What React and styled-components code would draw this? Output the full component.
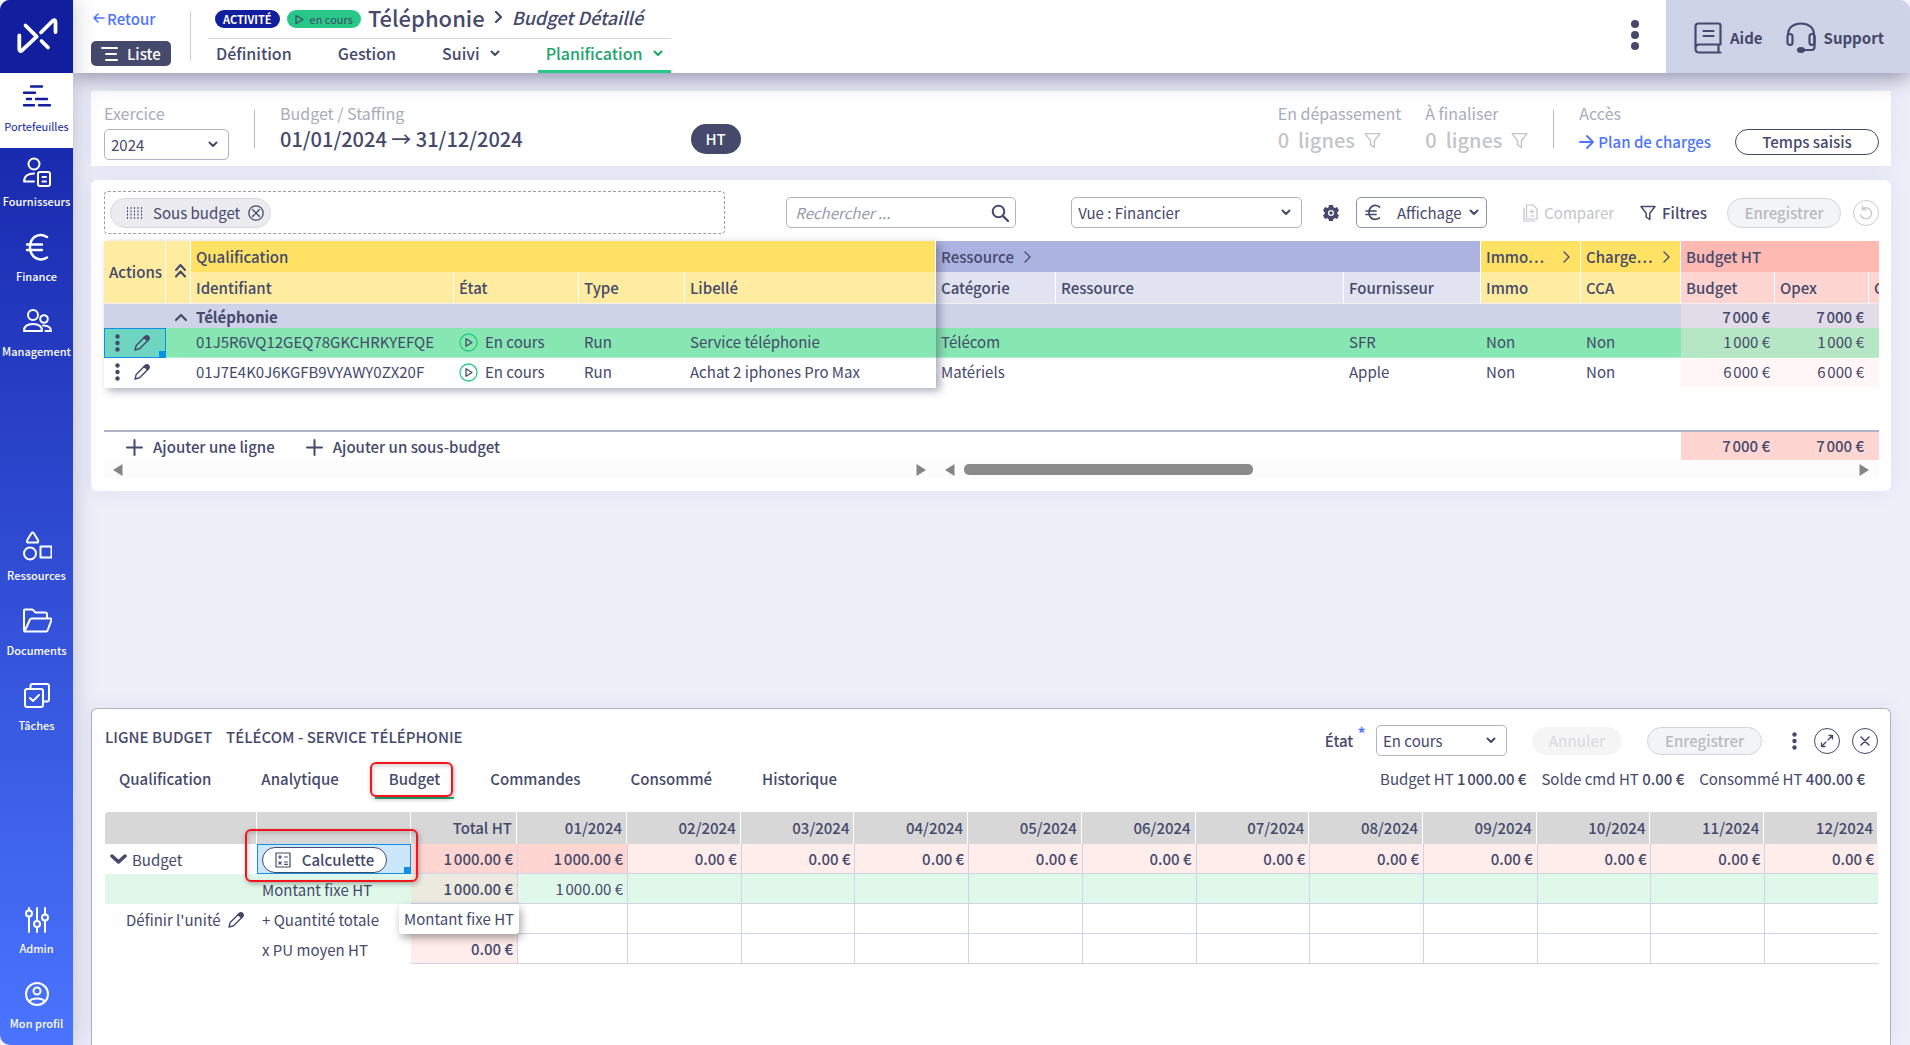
import React from "react";
import styled, { createGlobalStyle, css } from "styled-components";

const INK = "#45496b";
const MUTED = "#a9abb9";
const FAINT = "#c3c4c9";
const LINE = "#b0b2c5";
const BLUE = "#4d74fb";
const GREEN = "#27c887";

const GlobalStyle = createGlobalStyle`
  * {
    box-sizing: border-box;
  }
  body {
    margin: 0;
    background: #f4f4f4;
    color: ${INK};
    font-family: "Noto Sans CJK SC", sans-serif;
    font-size: 15px;
    line-height: 20px;
  }
  button, input, select {
    font: inherit;
    color: inherit;
  }
  button {
    padding: 0;
    border: 0;
    background: none;
    white-space: nowrap;
    cursor: pointer;
  }
  a {
    color: inherit;
    text-decoration: none;
  }
`;

const Page = styled.div`
  display: flex;
  min-height: 100vh;
  overflow: hidden;
  border-radius: 10px 10px 0 10px;
  background: #efeffa;
`;

/* Sidebar */

const Sidebar = styled.nav`
  position: relative;
  z-index: 3;
  flex: none;
  display: flex;
  flex-direction: column;
  width: 73px;
  background: linear-gradient(#0f1e9e, #1a2cb0 16%, #4a74ff);
  box-shadow: 0 0 22px rgba(69, 73, 107, 0.3);
`;

const Logo = styled.a`
  display: block;
  height: 73px;
  background: #111f9f;
`;

const Groups = styled.div`
  flex: 1;
  display: flex;
  flex-direction: column;
  justify-content: space-between;
`;

const NavItem = styled.a`
  display: flex;
  flex-direction: column;
  align-items: center;
  gap: 4px;
  height: 75px;
  padding-top: 9px;
  font-size: 11px;
  font-weight: ${(props) => (props.$active ? 400 : 500)};
  color: ${(props) => (props.$active ? "#111f9f" : "#fff")};
  background: ${(props) => (props.$active ? "#fff" : "transparent")};
  white-space: nowrap;
`;

/* Header */

const Main = styled.div`
  flex: 1;
  min-width: 0;
  display: flex;
  flex-direction: column;
`;

const Header = styled.header`
  position: relative;
  z-index: 2;
  display: flex;
  height: 73px;
  background: #fff;
  box-shadow: 0 4px 20px rgba(69, 73, 107, 0.6);
`;

const BackColumn = styled.div`
  display: flex;
  flex-direction: column;
  align-items: flex-start;
  gap: 12px;
  width: 117px;
  margin-top: 9px;
  padding-left: 18px;
`;

const BackLink = styled.a`
  display: flex;
  align-items: center;
  gap: 2px;
  padding-left: 2px;
  font-weight: 500;
  color: ${BLUE};
`;

const ListButton = styled.button`
  display: flex;
  align-items: center;
  gap: 9px;
  height: 25px;
  padding: 0 10px;
  border-radius: 5px;
  font-weight: 500;
  color: #fff;
  background: ${INK};
`;

const HeaderRule = styled.span`
  width: 1px;
  height: 50px;
  margin-top: 11px;
  background: #d0d1da;
`;

const HeaderBody = styled.div`
  margin-left: 17px;
`;

const TitleRow = styled.div`
  display: flex;
  align-items: center;
  gap: 7px;
  height: 39px;
  padding: 0 22px 0 7px;
  border-bottom: 1px solid #d3d4dc;
`;

const Chip = styled.span`
  display: flex;
  align-items: center;
  gap: 6px;
  height: 18px;
  padding: 0 8px;
  border-radius: 9px;
  font-size: 11px;
  font-weight: ${(props) => (props.$strong ? 700 : 400)};
  color: ${(props) => (props.$strong ? "#fff" : INK)};
  background: ${(props) => (props.$strong ? "#111f9f" : GREEN)};
`;

const Title = styled.h1`
  display: flex;
  align-items: center;
  gap: 10px;
  margin: 0;
  padding-bottom: 4px;
  font-size: 22px;
  font-weight: 500;
  line-height: 30px;
`;

const Crumb = styled.em`
  font-size: 18px;
`;

const MainTabs = styled.nav`
  display: flex;
`;

const MainTab = styled.a`
  display: flex;
  align-items: center;
  gap: 10px;
  height: 34px;
  margin-right: 30px;
  padding: 0 8px 3px;
  border-bottom: 3px solid ${(props) => (props.$active ? GREEN : "transparent")};
  font-size: 16px;
  font-weight: 500;
  color: ${(props) => (props.$active ? "#19a56c" : INK)};

  &:last-child {
    margin-right: 0;
  }
`;

const MenuButton = styled.button`
  margin-left: auto;
  padding: 0 27px;
`;

const HelpBar = styled.div`
  display: flex;
  align-items: center;
  gap: 23px;
  padding: 3px 26px 0 28px;
  font-weight: 700;
  background: #cfd3e8;
`;

const HelpLink = styled.a`
  display: flex;
  align-items: center;
  gap: 8px;
`;

/* Panels */

const Content = styled.main`
  flex: 1;
  display: flex;
  flex-direction: column;
  padding: 18px 19px 0 18px;
`;

const Panel = styled.section`
  background: #fff;
  box-shadow: 0 0 20px rgba(90, 95, 150, 0.1);
`;

const Summary = styled(Panel)`
  display: flex;
  height: 75px;
  padding: 12px 12px 0 13px;
`;

const Field = styled.div`
  display: flex;
  flex-direction: column;
  gap: ${(props) => props.$gap}px;
  margin-left: ${(props) => props.$ml || 0}px;
`;

const Caption = styled.label`
  font-size: 16px;
  color: ${MUTED};
`;

const Dates = styled.div`
  font-size: 20px;
  font-weight: 500;
  line-height: 24px;
`;

const TaxButton = styled.button`
  width: 50px;
  height: 30px;
  margin: 21px auto 0 168px;
  border-radius: 15px;
  font-weight: 500;
  color: #fff;
  background: ${INK};
`;

const Count = styled.button`
  display: flex;
  align-items: center;
  gap: 9px;
  font-size: 20px;
  line-height: 26px;
  font-weight: 500;
  color: ${FAINT};
`;

const SummaryRule = styled.span`
  width: 1px;
  height: 38px;
  margin: 7px 0 0 25px;
  background: #b4b6c6;
`;

const PlanLink = styled(BackLink)`
  gap: 4px;
  padding-left: 0;
`;

const SummaryAction = styled.div`
  margin: 26px 0 0 24px;
`;

const OutlineButton = styled.button`
  width: ${(props) => props.$w}px;
  height: 26px;
  border: 1px solid ${INK};
  border-radius: 13px;
  font-weight: 500;
  background: #fff;
`;

const SelectBox = styled.span`
  display: grid;
  align-items: center;
  width: ${(props) => props.$w}px;
  margin-left: ${(props) => props.$ml || 0}px;

  select, svg {
    grid-area: 1 / 1;
  }
  select {
    width: 100%;
    height: 31px;
    padding: 0 6px;
    border: 1px solid ${LINE};
    border-radius: 5px;
    background: #fff;
    appearance: none;
  }
  svg {
    justify-self: end;
    margin-right: 11px;
    pointer-events: none;
  }
`;

const GridPanel = styled(Panel)`
  margin-top: 14px;
  padding: 11px 12px 12px 13px;
  border-radius: 6px;
`;

const Toolbar = styled.div`
  display: flex;
  align-items: center;
  height: 43px;
  margin-bottom: 7px;
`;

const DropZone = styled.div`
  flex: 1;
  display: flex;
  align-items: center;
  height: 43px;
  padding-left: 5px;
  border: 1px dashed #9a9cb4;
  border-radius: 4px;
`;

const GroupChip = styled.span`
  display: flex;
  align-items: center;
  height: 30px;
  padding: 0 6px 0 16px;
  border: 1px solid #d8d8e2;
  border-radius: 15px;
  background: #ebebf0;

  button {
    height: 16px;
    margin-left: 8px;
  }
  svg {
    display: block;
  }
  span {
    margin-left: 11px;
  }
`;

const Search = styled.label`
  display: flex;
  align-items: center;
  width: 230px;
  height: 31px;
  margin: 0 55px 0 61px;
  padding: 0 6px 0 8px;
  border: 1px solid ${LINE};
  border-radius: 5px;

  input {
    flex: 1;
    min-width: 0;
    padding: 0;
    border: 0;
    outline: 0;
  }
  input::placeholder {
    font-style: italic;
    color: #9799ad;
    opacity: 1;
  }
`;

const GearButton = styled.button`
  height: 18px;
  margin: 0 16px 0 20px;
`;

const DisplayButton = styled.button`
  display: flex;
  align-items: center;
  justify-content: space-between;
  width: 131px;
  height: 31px;
  padding: 0 7px 0 8px;
  border: 1px solid #8f92ad;
  border-radius: 5px;

  span {
    margin-left: 8px;
  }
`;

const ToolButton = styled.button`
  display: flex;
  align-items: center;
  gap: 6px;
  margin-left: ${(props) => props.$ml}px;
  margin-right: ${(props) => props.$mr || 0}px;
  font-weight: ${(props) => (props.disabled ? 400 : 500)};
  color: ${(props) => (props.disabled ? FAINT : INK)};
`;

const PillButton = styled.button`
  width: ${(props) => props.$w}px;
  height: ${(props) => props.$h || 28}px;
  margin-left: ${(props) => props.$ml}px;
  border: 1px solid ${(props) => (props.$flat ? "#f5f5f6" : "#d3d4da")};
  border-radius: 15px;
  font-weight: 500;
  color: ${(props) => (props.$flat ? "#dcdce0" : "#b9babf")};
  background: ${(props) => (props.$flat ? "#f5f5f6" : "#f3f4f6")};
`;

const RoundButton = styled.button`
  display: flex;
  align-items: center;
  justify-content: center;
  width: 26px;
  height: 26px;
  margin-left: 12px;
  border: 1px solid ${(props) => (props.disabled ? "#c9cad0" : INK)};
  border-radius: 50%;
  color: ${(props) => (props.disabled ? "#c9cad0" : INK)};
`;

/* Budget grid */

const Split = styled.div`
  display: flex;
  height: 189px;
`;

const Frozen = styled.div`
  position: relative;
  z-index: 1;
  flex: none;
  width: 832px;
  height: 147px;
  background: #fff;
  box-shadow: 4px 3px 8px rgba(69, 73, 107, 0.45);
`;

const Scrolled = styled.div`
  flex: 1;
  min-width: 0;
  overflow: hidden;
`;

const Table = styled.table`
  width: ${(props) => props.$w};
  table-layout: fixed;
  border-collapse: separate;
  border-spacing: 0;

  th, td {
    padding: 0 5px;
    overflow: hidden;
    text-align: left;
    white-space: nowrap;
    font-weight: 400;
  }
  .toggle {
    padding: 0 0 0 8px;
  }
`;

const tones = {
  yellow: ["#ffe164", "#ffeca0"],
  indigo: ["#acb3e1", "#e1e3f1"],
  red: ["#ffb9b3", "#ffd5d1"],
};

const HeadTop = styled.tr`
  height: 31px;

  && th {
    font-weight: 500;
  }
`;

const HeadSub = styled(HeadTop)`
  height: 32px;
`;

const HeadCell = styled.th`
  border-right: 1px solid #fff;
  border-bottom: ${(props) => (props.$top ? 0 : 1)}px solid #f0f0f4;
  background: ${(props) => tones[props.$tone][props.$top ? 0 : 1]};
`;

const HeadLabel = styled.span`
  display: flex;
  align-items: center;
  justify-content: ${(props) => (props.$spread ? "space-between" : "flex-start")};
  gap: 10px;
  padding-right: 5px;
`;

const GroupRow = styled.tr`
  height: 24px;

  && td {
    padding-top: 2px;
    font-weight: 700;
    background: #ced3e8;
  }
  && td.amount {
    font-weight: 500;
    text-align: right;
    background: #e2dce9;
  }
`;

const LineRow = styled.tr`
  height: 30px;

  && td {
    padding-bottom: 1px;
    border-bottom: 1px solid ${(props) => (props.$selected ? "#b4f0ce" : "#fff")};
    background: ${(props) => (props.$selected ? "#86e7b2" : "#fff")};
  }
  && td.amount {
    text-align: right;
    background: ${(props) => (props.$selected ? "#b5e7c5" : "#fff6f5")};
  }
`;

const selection = css`
  position: relative;
  outline: 1px solid #0e90ea;
  outline-offset: -1px;

  &::after {
    content: "";
    position: absolute;
    right: 0;
    bottom: 0;
    width: 7px;
    height: 7px;
    background: #0e90ea;
  }
`;

const ActionCell = styled.td`
  ${LineRow} && {
    padding-left: 11px;
    ${(props) =>
      props.$selected &&
      css`
        ${selection}
        border-bottom: 0;
        background: #6ed6c0;
      `}
  }
`;

const Inline = styled.span`
  display: flex;
  align-items: center;
  gap: ${(props) => props.$gap}px;

  button, svg {
    display: block;
  }
`;

const GridFooter = styled.div`
  display: flex;
  align-items: center;
  gap: 31px;
  height: 30px;
  padding-left: 22px;
  border-top: 2px solid ${LINE};
`;

const AddButton = styled.button`
  display: flex;
  align-items: center;
  gap: 10px;
  padding-top: 2px;
  font-weight: 500;
`;

const Totals = styled.div`
  display: grid;
  grid-template-columns: 94px 94px 10px;
  align-items: center;
  height: 28px;
  margin-left: auto;
  font-weight: 500;
  text-align: right;
  background: #ffd5d1;

  span {
    padding-right: 5px;
  }
`;

const Scrollbars = styled.div`
  display: flex;
  height: 19px;
  background: #fcfcfc;
`;

const Scrollbar = styled.div`
  display: flex;
  align-items: center;
  ${(props) => (props.$w ? `width: ${props.$w}px;` : "flex: 1;")}
  padding: 0 10px 0 9px;

  svg:last-child {
    margin-left: auto;
  }
`;

const Thumb = styled.span`
  width: 289px;
  height: 11px;
  margin-left: 9px;
  border-radius: 5px;
  background: #8b8b8b;
`;

/* Detail panel */

const Detail = styled(Panel)`
  min-height: 337px;
  margin-top: auto;
  padding: 16px 12px 0 13px;
  border: 1px solid ${LINE};
  border-bottom: 0;
  border-radius: 6px 6px 0 0;
`;

const DetailHead = styled.div`
  display: flex;
  align-items: center;
  height: 31px;
`;

const DetailTitle = styled.h2`
  display: flex;
  gap: 14px;
  margin: 0 auto 0 0;
  padding-bottom: 8px;
  font-size: 15px;
  font-weight: 500;
  line-height: 20px;
`;

const StateLabel = styled.label`
  font-weight: 500;

  sup {
    margin-left: 4px;
    font-size: 18px;
    line-height: 1px;
    color: ${BLUE};
  }
`;

const DetailBar = styled.div`
  display: flex;
  justify-content: space-between;
  margin: 8px 0 13px;
`;

const DetailTabs = styled.div`
  display: flex;
  gap: 22px;
`;

const DetailTab = styled.button`
  position: relative;
  height: 35px;
  padding: 0 14px 3px;
  border-bottom: 2px solid ${(props) => (props.$active ? "#22b57a" : "transparent")};
  font-weight: 500;
`;

const Highlight = styled.span`
  position: absolute;
  z-index: 2;
  inset: ${(props) => props.$inset};
  border: 2px solid #f3151b;
  border-radius: 6px;
  box-shadow: 1px 2px 5px rgba(0, 0, 0, 0.3), inset 1px 2px 5px rgba(0, 0, 0, 0.18);
  pointer-events: none;
`;

const Stats = styled.div`
  display: flex;
  gap: 15px;
  margin-top: 5px;
  padding-right: 13px;

  b {
    font-weight: 500;
  }
`;

const MonthTable = styled.table`
  width: 100%;
  table-layout: fixed;
  border-collapse: separate;
  border-spacing: 0;

  tr {
    height: 30px;
  }
  thead tr {
    height: 32px;
  }
  th, td {
    padding: 0 4px 0 5px;
    font-weight: 400;
    text-align: left;
    white-space: nowrap;
  }
  td {
    padding-top: 1px;
  }
  thead th {
    border-right: 1px solid #fff;
    font-weight: 500;
    text-align: right;
    background: #d7d7d7;
  }
  thead th:first-child {
    border-top-left-radius: 4px;
  }
`;

const rowTint = {
  total: "#fff",
  fixed: "#e0f8ea",
  plain: "#fff",
};

const NameCell = styled.td`
  position: relative;
  background: ${(props) => rowTint[props.$kind]};
`;

const UnitCell = styled.td`
  && {
    padding-left: 21px;
  }
`;

const CalcCell = styled.td`
  ${selection}
  background: #cce7fa;
`;

const CalcButton = styled(OutlineButton)`
  display: flex;
  align-items: center;
  justify-content: center;
  gap: 11px;
`;

const SumCell = styled.td`
  && {
    border-bottom: 1px solid #d0d3e6;
    font-weight: 500;
    text-align: right;
    background: ${(props) =>
      ({ total: "#ffd5d1", fixed: "#ece9df", plain: "#ffedeb" }[props.$kind])};
  }
`;

const MonthCell = styled.td`
  && {
    border-bottom: 1px solid #d0d3e6;
    border-left: 1px solid #d0d3e6;
    font-weight: ${(props) => (props.$kind === "total" ? 500 : 400)};
    text-align: right;
    background: ${(props) =>
      props.$kind === "total"
        ? props.$filled
          ? "#ffd5d1"
          : "#ffedeb"
        : rowTint[props.$kind]};
  }
`;

const Tooltip = styled.span`
  position: absolute;
  z-index: 3;
  top: 30px;
  left: 142px;
  height: 30px;
  padding: 5px;
  border-radius: 3px;
  background: #fff;
  box-shadow: 2px 4px 8px rgba(0, 0, 0, 0.35);
`;

/* Icons */

const Svg = ({ w = 20, h, box, sw = 2, children }) => (
  <svg
    width={w}
    height={h || w}
    viewBox={box || `0 0 ${w} ${h || w}`}
    fill="none"
    stroke="currentColor"
    strokeWidth={sw}
    strokeLinecap="round"
    strokeLinejoin="round"
    aria-hidden="true"
  >
    {children}
  </svg>
);

const Chevron = () => (
  <Svg w={10} h={7}>
    <path d="M1.5 1.5 5 5 8.5 1.5" />
  </Svg>
);

const ChevronRight = ({ sw = 1.3 }) => (
  <Svg w={7} h={12} sw={sw}>
    <path d="M1 1l5 5-5 5" />
  </Svg>
);

const Kebab = () => (
  <svg width="5" height="18" viewBox="0 0 5 18" fill={INK} aria-hidden="true">
    <circle cx="2.5" cy="2.5" r="2.2" />
    <circle cx="2.5" cy="9" r="2.2" />
    <circle cx="2.5" cy="15.5" r="2.2" />
  </svg>
);

const Pencil = () => (
  <Svg w={16} sw={1.4}>
    <path d="M1 15l1.2-4.6 8.2-8.2 3.4 3.4-8.2 8.2z" />
    <path d="M10.2 2.4l1.6-1.4a2.4 2.4 0 0 1 3.2 3.2l-1.4 1.6z" fill="currentColor" />
  </Svg>
);

const Funnel = ({ w = 16, sw = 1.5 }) => (
  <Svg w={w} box="0 0 16 16" sw={sw}>
    <path d="M1 1.500h14L9.800 8.200v6.300L6.200 12V8.200z" />
  </Svg>
);

const Plus = () => (
  <Svg w={17}>
    <path d="M8.5 1v15M1 8.500h15" />
  </Svg>
);

const Play = () => (
  <Svg w={19} sw={1.3}>
    <circle cx="9.5" cy="9.5" r="8.5" stroke={GREEN} />
    <path d="M7 5.800v7.400l6-3.700z" />
  </Svg>
);

const Triangle = ({ left }) => (
  <svg width="10" height="12" viewBox="0 0 10 12" fill="#858585" aria-hidden="true">
    <path d={left ? "M9.500 0v12L0 6z" : "M.5 0v12L10 6z"} />
  </svg>
);

const navIcons = {
  portfolios: (
    <path d="M9 4.500h11M2 10.800h11M5 17h4M14 17h11M2 23.300h10M17 23.300h11" strokeWidth="2.4" />
  ),
  suppliers: (
    <>
      <circle cx="12" cy="7" r="5.5" />
      <path d="M12 16.500c-6 0-10 3-10 8h10" />
      <rect x="16" y="15" width="12" height="14" rx="2" />
      <path d="M20.500 20h3.500M20.500 24.500h3.500" />
    </>
  ),
  finance: (
    <path d="M25 5c-8-5-17 0-17 10s9 15.500 17 10.500M5 12.500h15M5 18h15" strokeWidth="2.4" />
  ),
  management: (
    <>
      <circle cx="11" cy="8" r="5" />
      <path d="M2 24c0-5 3-7 9-7s9 2 9 7z" />
      <circle cx="22" cy="12" r="3.8" />
      <path d="M21 18.500c5 0 8 1.500 8 5.500h-5.500" />
    </>
  ),
  resources: (
    <>
      <path d="M9.300 2.500c.8-1.300 1.800-1.300 2.600 0l4 6.500c.8 1.600.2 2.600-1.400 2.600H6.700c-1.600 0-2.200-1-1.400-2.600z" />
      <circle cx="8" cy="22.5" r="6" />
      <path d="M18.500 15.500h11v11h-11z" />
    </>
  ),
  documents: (
    <>
      <path d="M2 24V4.500q0-1 1-1h7q1 0 2 1.500t2 1.500h9q2 0 2 2V12" />
      <path d="M2.500 25.500L8 13.500q.5-1 1.500-1h19q1.500 0 1 1.500l-4 10.500q-.5 1-1.500 1H4q-2 0-2-2" />
    </>
  ),
  tasks: (
    <>
      <rect x="3" y="8" width="18" height="18" rx="2" />
      <path d="M8.500 7V5q0-2 2-2H25q2 0 2 2v13.500q0 2-2 2h-3M8 17l3 3 6-6" />
    </>
  ),
  admin: (
    <>
      <path d="M7 4v2M7 13v15M15 4v13M15 23.500V28M23 4v6.500M23 17v11" />
      <circle cx="7" cy="9.5" r="3" />
      <circle cx="15" cy="20" r="3" />
      <circle cx="23" cy="13.5" r="3" />
    </>
  ),
  profile: (
    <>
      <circle cx="15" cy="15" r="11" />
      <circle cx="15" cy="12" r="3.5" />
      <path d="M7.500 22.500c2-4 13-4 15 0" />
    </>
  ),
};

const navGroups = [
  [
    ["portfolios", "Portefeuilles"],
    ["suppliers", "Fournisseurs"],
    ["finance", "Finance"],
    ["management", "Management"],
  ],
  [
    ["resources", "Ressources"],
    ["documents", "Documents"],
    ["tasks", "Tâches"],
  ],
  [
    ["admin", "Admin"],
    ["profile", "Mon profil"],
  ],
];

const lines = [
  {
    id: "01J5R6VQ12GEQ78GKCHRKYEFQE",
    label: "Service téléphonie",
    category: "Télécom",
    supplier: "SFR",
    amount: "1\u202f000 €",
    selected: true,
  },
  {
    id: "01J7E4K0J6KGFB9VYAWY0ZX20F",
    label: "Achat 2 iphones Pro Max",
    category: "Matériels",
    supplier: "Apple",
    amount: "6\u202f000 €",
  },
];

const detailTabs = [
  "Qualification",
  "Analytique",
  "Budget",
  "Commandes",
  "Consommé",
  "Historique",
];

const months = Array.from(
  { length: 12 },
  (_, i) => `${String(i + 1).padStart(2, "0")}/2024`
);

const TOTAL = "7\u202f000 €";
const THOUSAND = "1\u202f000.00 €";

const AppSidebar = () => (
  <Sidebar>
    <Logo href="#" aria-label="Accueil">
      <svg
        width="73"
        height="73"
        viewBox="0 0 73 73"
        fill="none"
        stroke="#fff"
        strokeWidth="3.8"
        strokeLinecap="round"
        strokeLinejoin="round"
      >
        <path d="M19.300 35.500V49q0 3.500 3 1.200l14.400-13.500-11.200-11.200" />
        <path d="M41 32.500L52.500 21q3-2.200 3 1.200V32M41.500 41l6.500 6.500" />
      </svg>
    </Logo>
    <Groups>
      {navGroups.map((group) => (
        <div key={group[0][0]}>
          {group.map(([icon, label]) => (
            <NavItem href="#" key={icon} $active={icon === "portfolios"}>
              <Svg w={30}>{navIcons[icon]}</Svg>
              {label}
            </NavItem>
          ))}
        </div>
      ))}
    </Groups>
  </Sidebar>
);

const AppHeader = () => (
  <Header>
    <BackColumn>
      <BackLink href="#">
        <Svg w={12} sw={1.5}>
          <path d="M11 5H1M5 1L1 5l4 4" />
        </Svg>
        Retour
      </BackLink>
      <ListButton>
        <Svg w={17} h={14}>
          <path d="M1 1h15M5 7h10M5 13h11" />
        </Svg>
        Liste
      </ListButton>
    </BackColumn>
    <HeaderRule />
    <HeaderBody>
      <TitleRow>
        <Chip $strong>ACTIVITÉ</Chip>
        <Chip>
          <Svg w={9} h={11} sw={1.3}>
            <path d="M1 1.500v8l7-4z" />
          </Svg>
          en cours
        </Chip>
        <Title>
          Téléphonie <ChevronRight sw={2.2} /> <Crumb>Budget Détaillé</Crumb>
        </Title>
      </TitleRow>
      <MainTabs>
        <MainTab href="#">Définition</MainTab>
        <MainTab href="#">Gestion</MainTab>
        <MainTab href="#">
          Suivi <Chevron />
        </MainTab>
        <MainTab href="#" $active>
          Planification <Chevron />
        </MainTab>
      </MainTabs>
    </HeaderBody>
    <MenuButton aria-label="Menu">
      <svg width="8" height="32" viewBox="0 0 8 32" fill={INK}>
        <circle cx="4" cy="5" r="4" />
        <circle cx="4" cy="16" r="4" />
        <circle cx="4" cy="27" r="4" />
      </svg>
    </MenuButton>
    <HelpBar>
      <HelpLink href="#">
        <Svg w={28} h={32} sw={2.2}>
          <path d="M4.500 1.500h20q2 0 2 2v19H5q-3.500 0-3.500 4t3.500 4h21.500M24.500 23v7M1.500 27V4.500q0-3 3-3M9.500 9h10M9.500 14h10" />
        </Svg>
        Aide
      </HelpLink>
      <HelpLink href="#">
        <Svg w={30} h={32} box="1 0 30 32" sw={2.2}>
          <path d="M3 13C3 5 9 1.500 16 1.500S29 5 29 13M29.500 14v11q0 3-3 3H17" />
          <rect x="2.500" y="12" width="5" height="11" rx="2.500" />
          <rect x="24.500" y="12" width="5" height="11" rx="2.500" />
          <ellipse cx="16" cy="28" rx="3" ry="1.800" fill="currentColor" />
        </Svg>
        Support
      </HelpLink>
    </HelpBar>
  </Header>
);

const BudgetSummary = () => (
  <Summary>
    <Field $gap={6}>
      <Caption htmlFor="exercice">Exercice</Caption>
      <SelectBox $w={125}>
        <select id="exercice" defaultValue="2024">
          <option>2024</option>
        </select>
        <Chevron />
      </SelectBox>
    </Field>
    <SummaryRule />
    <Field $ml={25} $gap={4}>
      <Caption as="span">Budget / Staffing</Caption>
      <Dates>01/01/2024 → 31/12/2024</Dates>
    </Field>
    <TaxButton>HT</TaxButton>
    <Field $gap={4}>
      <Caption as="span">En dépassement</Caption>
      <Count>
        <span>0&nbsp; lignes</span>
        <Funnel w={17} sw={1.3} />
      </Count>
    </Field>
    <Field $ml={24} $gap={4}>
      <Caption as="span">À finaliser</Caption>
      <Count>
        <span>0&nbsp; lignes</span>
        <Funnel w={17} sw={1.3} />
      </Count>
    </Field>
    <SummaryRule />
    <Field $ml={25} $gap={9}>
      <Caption as="span">Accès</Caption>
      <PlanLink href="#">
        <Svg w={15} h={14} sw={1.8}>
          <path d="M1 7h13M8 1l6 6-6 6" />
        </Svg>
        Plan de charges
      </PlanLink>
    </Field>
    <SummaryAction>
      <OutlineButton $w={144}>Temps saisis</OutlineButton>
    </SummaryAction>
  </Summary>
);

const GridToolbar = () => (
  <Toolbar>
    <DropZone>
      <GroupChip>
        <svg
          width="15"
          height="12"
          viewBox="0 0 15 12"
          stroke={INK}
          strokeDasharray="2 1.3"
          aria-hidden="true"
        >
          <path d="M.5 0v12M4 0v12M7.500 0v12M11 0v12M14.500 0v12" />
        </svg>
        <span>Sous budget</span>
        <button aria-label="Retirer">
          <Svg w={16} sw={1.3}>
            <circle cx="8" cy="8" r="7.2" />
            <path d="M4.500 4.500l7 7M11.500 4.500l-7 7" />
          </Svg>
        </button>
      </GroupChip>
    </DropZone>
    <Search>
      <input type="text" placeholder="Rechercher ..." aria-label="Rechercher" />
      <Svg w={18}>
        <circle cx="7.5" cy="7.5" r="5.8" />
        <path d="M12 12l5 5" strokeWidth="2.4" />
      </Svg>
    </Search>
    <SelectBox $w={231}>
      <select aria-label="Vue" defaultValue="Vue : Financier">
        <option>Vue : Financier</option>
      </select>
      <Chevron />
    </SelectBox>
    <GearButton aria-label="Paramètres">
      <svg width="18" height="18" viewBox="0 0 18 18" aria-hidden="true">
        <g fill={INK}>
          <circle cx="9" cy="9" r="6.3" />
          <path d="M7 1h4l.6 3H6.400zM7 17h4l.6-3H6.400zM1 6.500L3 3l3.500 1.500L3.500 9zM17 6.500L15 3l-3.500 1.500L14.500 9zM1 11.500L3 15l3.500-1.500L3.500 9zM17 11.500L15 15l-3.500-1.500L14.500 9z" />
        </g>
        <circle cx="9" cy="9" r="2.4" fill={INK} stroke="#fff" strokeWidth="1.3" />
      </svg>
    </GearButton>
    <DisplayButton>
      <Svg w={16} h={17} sw={1.7}>
        <path d="M14.500 3C9-.5 4 2.500 4 8.500S9 17 14.500 14M1 7h10M1 10.500h10" />
      </Svg>
      <span>Affichage</span>
      <Chevron />
    </DisplayButton>
    <ToolButton $ml={36} disabled>
      <Svg w={15} h={18} sw={1.2}>
        <path d="M1 4v13h10.500M4 1h6l4 4v10H3.500V1zM7 7.500h4M9 5.500v4M7 12h4" />
      </Svg>
      Comparer
    </ToolButton>
    <ToolButton $ml={26}>
      <Funnel />
      Filtres
    </ToolButton>
    <PillButton $w={114} $h={30} $ml={20} disabled>
      Enregistrer
    </PillButton>
    <RoundButton aria-label="Réinitialiser" disabled>
      <Svg w={16} sw={1.5}>
        <path d="M4 4.500A5.500 5.500 0 1 1 2.800 10M4.500 1v3.800h3.500" />
      </Svg>
    </RoundButton>
  </Toolbar>
);

const LeftGrid = () => (
  <Frozen>
    <Table $w="832px">
      <colgroup>
        <col width="62" />
        <col width="25" />
        <col width="263" />
        <col width="125" />
        <col width="106" />
        <col width="251" />
      </colgroup>
      <thead>
        <HeadTop>
          <HeadCell $tone="yellow" rowSpan={2}>
            Actions
          </HeadCell>
          <HeadCell $tone="yellow" rowSpan={2} className="toggle">
            <Svg w={13} h={15}>
              <path d="M2 7l4.500-5L11 7M2 13.500l4.500-5 4.500 5" />
            </Svg>
          </HeadCell>
          <HeadCell $tone="yellow" $top colSpan={4}>
            Qualification
          </HeadCell>
        </HeadTop>
        <HeadSub>
          <HeadCell $tone="yellow">Identifiant</HeadCell>
          <HeadCell $tone="yellow">État</HeadCell>
          <HeadCell $tone="yellow">Type</HeadCell>
          <HeadCell $tone="yellow">Libellé</HeadCell>
        </HeadSub>
      </thead>
      <tbody>
        <GroupRow>
          <td />
          <td className="toggle">
            <Inline>
              <Svg w={14} h={9} sw={2.2}>
                <path d="M2 7l5-5 5 5" />
              </Svg>
            </Inline>
          </td>
          <td colSpan={4}>Téléphonie</td>
        </GroupRow>
        {lines.map((line) => (
          <LineRow key={line.id} $selected={line.selected}>
            <ActionCell $selected={line.selected}>
              <Inline $gap={14}>
                <button aria-label="Actions de la ligne">
                  <Kebab />
                </button>
                <button aria-label="Modifier">
                  <Pencil />
                </button>
              </Inline>
            </ActionCell>
            <td />
            <td>{line.id}</td>
            <td>
              <Inline $gap={7}>
                <Play /> En cours
              </Inline>
            </td>
            <td>Run</td>
            <td>{line.label}</td>
          </LineRow>
        ))}
      </tbody>
    </Table>
  </Frozen>
);

const RightGrid = () => (
  <Scrolled>
    <Table $w="1027px">
      <colgroup>
        <col width="120" />
        <col width="288" />
        <col width="137" />
        <col width="100" />
        <col width="100" />
        <col width="94" />
        <col width="94" />
        <col width="94" />
      </colgroup>
      <thead>
        <HeadTop>
          <HeadCell $tone="indigo" $top colSpan={3}>
            <HeadLabel>
              Ressource <ChevronRight />
            </HeadLabel>
          </HeadCell>
          <HeadCell $tone="yellow" $top>
            <HeadLabel $spread>
              Immo… <ChevronRight />
            </HeadLabel>
          </HeadCell>
          <HeadCell $tone="yellow" $top>
            <HeadLabel $spread>
              Charge… <ChevronRight />
            </HeadLabel>
          </HeadCell>
          <HeadCell $tone="red" $top colSpan={3}>
            Budget HT
          </HeadCell>
        </HeadTop>
        <HeadSub>
          <HeadCell $tone="indigo">Catégorie</HeadCell>
          <HeadCell $tone="indigo">Ressource</HeadCell>
          <HeadCell $tone="indigo">Fournisseur</HeadCell>
          <HeadCell $tone="yellow">Immo</HeadCell>
          <HeadCell $tone="yellow">CCA</HeadCell>
          <HeadCell $tone="red">Budget</HeadCell>
          <HeadCell $tone="red">Opex</HeadCell>
          <HeadCell $tone="red">Capex</HeadCell>
        </HeadSub>
      </thead>
      <tbody>
        <GroupRow>
          <td colSpan={5} />
          <td className="amount">{TOTAL}</td>
          <td className="amount">{TOTAL}</td>
          <td className="amount" />
        </GroupRow>
        {lines.map((line) => (
          <LineRow key={line.id} $selected={line.selected}>
            <td>{line.category}</td>
            <td />
            <td>{line.supplier}</td>
            <td>Non</td>
            <td>Non</td>
            <td className="amount">{line.amount}</td>
            <td className="amount">{line.amount}</td>
            <td className="amount" />
          </LineRow>
        ))}
      </tbody>
    </Table>
  </Scrolled>
);

const DetailPanel = () => (
  <Detail>
    <DetailHead>
      <DetailTitle>
        <span>LIGNE BUDGET</span>
        <span>TÉLÉCOM - SERVICE TÉLÉPHONIE</span>
      </DetailTitle>
      <StateLabel htmlFor="etat">
        État<sup>*</sup>
      </StateLabel>
      <SelectBox $w={131} $ml={10}>
        <select id="etat" defaultValue="En cours">
          <option>En cours</option>
        </select>
        <Chevron />
      </SelectBox>
      <PillButton $w={90} $ml={25} $flat disabled>
        Annuler
      </PillButton>
      <PillButton $w={115} $ml={25} disabled>
        Enregistrer
      </PillButton>
      <ToolButton $ml={30} $mr={5} aria-label="Plus d'actions">
        <Kebab />
      </ToolButton>
      <RoundButton aria-label="Agrandir">
        <Svg w={14} sw={1.3}>
          <path d="M2 12l4-4M8 6l4-4M9 1.500h3.500V5M1.500 9v3.500H5" />
        </Svg>
      </RoundButton>
      <RoundButton aria-label="Fermer">
        <Svg w={10} sw={1.6}>
          <path d="M1 1l8 8M9 1L1 9" />
        </Svg>
      </RoundButton>
    </DetailHead>
    <DetailBar>
      <DetailTabs>
        {detailTabs.map((tab) => (
          <DetailTab key={tab} $active={tab === "Budget"}>
            {tab}
            {tab === "Budget" && <Highlight $inset="-2px 1px 0 -5px" />}
          </DetailTab>
        ))}
      </DetailTabs>
      <Stats>
        <span>
          Budget HT <b>{THOUSAND}</b>
        </span>
        <span>
          Solde cmd HT <b>0.00 €</b>
        </span>
        <span>
          Consommé HT <b>400.00 €</b>
        </span>
      </Stats>
    </DetailBar>
    <MonthTable>
      <colgroup>
        <col width="152" />
        <col width="154" />
        <col width="106" />
        <col width="110" />
      </colgroup>
      <thead>
        <tr>
          <th />
          <th />
          <th>Total HT</th>
          {months.map((month) => (
            <th key={month}>{month}</th>
          ))}
        </tr>
      </thead>
      <tbody>
        <tr>
          <NameCell $kind="total">
            <Inline $gap={5}>
              <Svg w={17} h={11} sw={3.5}>
                <path d="M2 2l6.500 6L15 2" />
              </Svg>
              Budget
            </Inline>
          </NameCell>
          <CalcCell>
            <CalcButton $w={125}>
              <Svg w={16} sw={1.2}>
                <path d="M1 1h14v14H1zM3.500 5h3M5 3.500v3M9.500 5h3M3.800 9.800l2.400 2.400M6.200 9.800l-2.400 2.400M9.500 10h3M9.500 12.300h3" />
              </Svg>
              Calculette
            </CalcButton>
            <Highlight $inset="-15px -7px -8px -12px" />
          </CalcCell>
          <SumCell $kind="total">{THOUSAND}</SumCell>
          {months.map((month, i) => (
            <MonthCell key={month} $kind="total" $filled={i === 0}>
              {i === 0 ? THOUSAND : "0.00 €"}
            </MonthCell>
          ))}
        </tr>
        <tr>
          <NameCell $kind="fixed" />
          <NameCell $kind="fixed">
            Montant fixe HT
            <Tooltip role="tooltip">Montant fixe HT</Tooltip>
          </NameCell>
          <SumCell $kind="fixed">{THOUSAND}</SumCell>
          {months.map((month, i) => (
            <MonthCell key={month} $kind="fixed">
              {i === 0 && THOUSAND}
            </MonthCell>
          ))}
        </tr>
        <tr>
          <UnitCell>
            <Inline $gap={7}>
              Définir l'unité
              <button aria-label="Modifier l'unité">
                <Pencil />
              </button>
            </Inline>
          </UnitCell>
          <td>+ Quantité totale</td>
          <SumCell $kind="plain" />
          {months.map((month) => (
            <MonthCell key={month} $kind="plain" />
          ))}
        </tr>
        <tr>
          <td />
          <td>x PU moyen HT</td>
          <SumCell $kind="plain">0.00 €</SumCell>
          {months.map((month) => (
            <MonthCell key={month} $kind="plain" />
          ))}
        </tr>
      </tbody>
    </MonthTable>
  </Detail>
);

const App = () => (
  <>
    <GlobalStyle />
    <Page>
      <AppSidebar />
      <Main>
        <AppHeader />
        <Content>
          <BudgetSummary />
          <GridPanel>
            <GridToolbar />
            <Split>
              <LeftGrid />
              <RightGrid />
            </Split>
            <GridFooter>
              <AddButton>
                <Plus /> Ajouter une ligne
              </AddButton>
              <AddButton>
                <Plus /> Ajouter un sous-budget
              </AddButton>
              <Totals>
                <span>{TOTAL}</span>
                <span>{TOTAL}</span>
              </Totals>
            </GridFooter>
            <Scrollbars>
              <Scrollbar $w={832}>
                <Triangle left />
                <Triangle />
              </Scrollbar>
              <Scrollbar>
                <Triangle left />
                <Thumb />
                <Triangle />
              </Scrollbar>
            </Scrollbars>
          </GridPanel>
          <DetailPanel />
        </Content>
      </Main>
    </Page>
  </>
);

export default App;
